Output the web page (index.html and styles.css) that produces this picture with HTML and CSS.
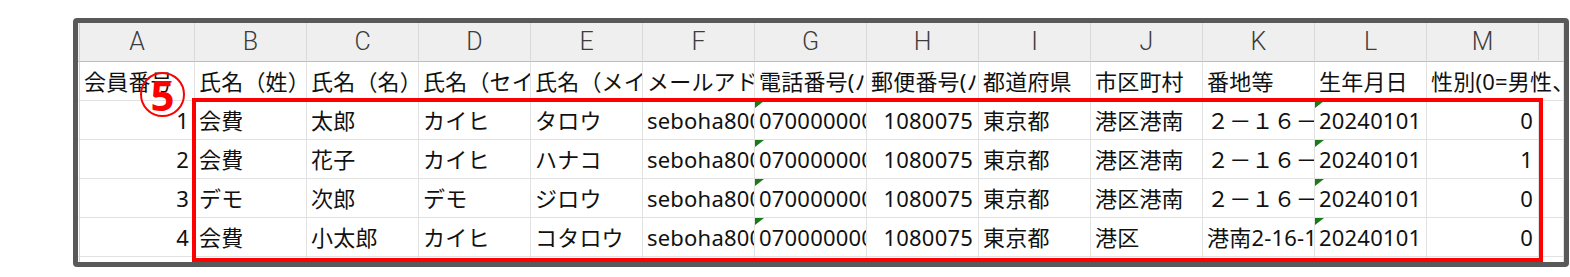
FILE: index.html
```html
<!DOCTYPE html>
<html lang="ja">
<head>
<meta charset="utf-8">
<title>会員データ</title>
<link rel="stylesheet" href="styles.css">
</head>
<body>
<div class="stage">
  <div class="frame">
    <div class="sheet">
      <div class="rh hd"></div>
      <div class="c hd col">A</div><div class="c hd col">B</div><div class="c hd col">C</div><div class="c hd col">D</div><div class="c hd col">E</div><div class="c hd col">F</div><div class="c hd col">G</div><div class="c hd col">H</div><div class="c hd col">I</div><div class="c hd col">J</div><div class="c hd col">K</div><div class="c hd col">L</div><div class="c hd col">M</div><div class="c hd col"></div>

      <div class="rh"></div>
      <div class="c">会員番号</div><div class="c">氏名（姓）</div><div class="c">氏名（名）</div><div class="c">氏名（セイ）</div><div class="c">氏名（メイ）</div><div class="c">メールアドレス</div><div class="c">電話番号(ハイフンなし)</div><div class="c">郵便番号(ハイフンなし)</div><div class="c">都道府県</div><div class="c">市区町村</div><div class="c">番地等</div><div class="c">生年月日</div><div class="c spill">性別(0=男性、1=女性)</div><div class="c last"></div>

      <div class="rh"></div>
      <div class="c num">1</div><div class="c">会費</div><div class="c">太郎</div><div class="c">カイヒ</div><div class="c">タロウ</div><div class="c">seboha8001@example.jp</div><div class="c flag">07000000001</div><div class="c num">1080075</div><div class="c">東京都</div><div class="c">港区港南</div><div class="c">２－１６－１</div><div class="c flag">20240101</div><div class="c num">0</div><div class="c"></div>

      <div class="rh"></div>
      <div class="c num">2</div><div class="c">会費</div><div class="c">花子</div><div class="c">カイヒ</div><div class="c">ハナコ</div><div class="c">seboha8002@example.jp</div><div class="c flag">07000000002</div><div class="c num">1080075</div><div class="c">東京都</div><div class="c">港区港南</div><div class="c">２－１６－１</div><div class="c flag">20240101</div><div class="c num">1</div><div class="c"></div>

      <div class="rh"></div>
      <div class="c num">3</div><div class="c">デモ</div><div class="c">次郎</div><div class="c">デモ</div><div class="c">ジロウ</div><div class="c">seboha8003@example.jp</div><div class="c flag">07000000003</div><div class="c num">1080075</div><div class="c">東京都</div><div class="c">港区港南</div><div class="c">２－１６－１</div><div class="c flag">20240101</div><div class="c num">0</div><div class="c"></div>

      <div class="rh"></div>
      <div class="c num">4</div><div class="c">会費</div><div class="c">小太郎</div><div class="c">カイヒ</div><div class="c">コタロウ</div><div class="c">seboha8004@example.jp</div><div class="c flag">07000000004</div><div class="c num">1080075</div><div class="c">東京都</div><div class="c">港区</div><div class="c">港南2-16-1</div><div class="c flag">20240101</div><div class="c num">0</div><div class="c"></div>

      <div class="rh"></div>
      <div class="c"></div><div class="c"></div><div class="c"></div><div class="c"></div><div class="c"></div><div class="c"></div><div class="c"></div><div class="c"></div><div class="c"></div><div class="c"></div><div class="c"></div><div class="c"></div><div class="c"></div><div class="c"></div>
    </div>
    <div class="highlight"></div>
    <div class="badge">5</div>
  </div>
</div>
</body>
</html>
```

FILE: styles.css
```css
html, body {
  margin: 0;
  padding: 0;
  background: #ffffff;
}

.stage {
  padding: 18px 0 0 73px;
}

.frame {
  position: relative;
  width: 1486px;
  height: 239px;
  border: 5px solid #595959;
  border-radius: 4px;
  overflow: hidden;
  background: #ffffff;
}

.sheet {
  display: grid;
  grid-template-columns: 2px 115px repeat(12, 112px) 25px;
  grid-auto-rows: 39px;
  font-family: "Noto Sans", "Noto Sans CJK JP", sans-serif;
  font-size: 22px;
  letter-spacing: 0.2px;
  color: #111111;
}

.rh {
  box-sizing: border-box;
  border-right: 1px solid #cfcfcf;
  border-bottom: 1px solid #e1e1e1;
}

.rh.hd {
  background: #efefef;
  border-bottom: 1px solid #bdbdbd;
}

.c {
  box-sizing: border-box;
  position: relative;
  border-right: 1px solid #e1e1e1;
  border-bottom: 1px solid #e1e1e1;
  padding: 0 4px;
  line-height: 38px;
  white-space: nowrap;
  overflow: hidden;
}

.c.hd {
  background: #efefef;
  border-right-color: #dadada;
  border-bottom-color: #bdbdbd;
}

.col {
  text-align: center;
  font-family: Roboto, "Noto Sans", sans-serif;
  font-weight: 300;
  font-size: 25px;
  letter-spacing: 0;
  color: #3c3c3c;
  line-height: 38px;
}

.num {
  text-align: right;
  padding-right: 5px;
}

.spill {
  overflow: visible;
  border-right-color: transparent;
  z-index: 1;
}

.last {
  background: transparent;
}

.flag::before {
  content: "";
  position: absolute;
  top: 0;
  left: 0;
  border-top: 7px solid #1a7a1a;
  border-right: 9px solid transparent;
}

.highlight {
  position: absolute;
  left: 114px;
  top: 75px;
  width: 1351px;
  height: 164px;
  box-sizing: border-box;
  border: 4px solid #ff0000;
  z-index: 2;
}

.badge {
  position: absolute;
  left: 62px;
  top: 49px;
  width: 45px;
  height: 45px;
  box-sizing: border-box;
  border: 2px solid #ff0000;
  border-radius: 50%;
  display: flex;
  align-items: center;
  justify-content: center;
  font-family: "Noto Sans", sans-serif;
  font-weight: 700;
  font-size: 42px;
  line-height: 1;
  color: #ff0000;
  z-index: 3;
}
```
